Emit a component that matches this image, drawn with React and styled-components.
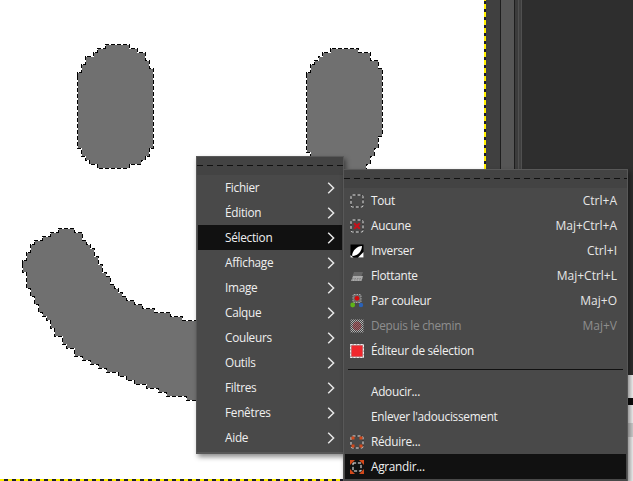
import React from "react";
import styled, { createGlobalStyle } from "styled-components";

const Global = createGlobalStyle`
  html, body { margin: 0; padding: 0; background: #2e2e2e; overflow: hidden; }
  #root { width: 633px; height: 481px; }
`;

const Window = styled.div`
  position: relative;
  display: flex;
  width: 633px;
  height: 481px;
  overflow: hidden;
  font-family: "Open Sans", "Noto Sans", sans-serif;
`;

const Canvas = styled.div`
  position: relative;
  flex: 0 0 484px;
  height: 481px;
  background: #fff;
`;
const Drawing = styled.svg`
  display: block;
  width: 484px;
  height: 481px;
`;
const BottomGuide = styled.div`
  position: absolute;
  left: 0;
  right: 0;
  bottom: 0;
  height: 2px;
  background: repeating-linear-gradient(90deg, #ffef00 0 4px, #1c1c28 4px 8px);
`;
const VerticalGuide = styled.div`
  flex: 0 0 2px;
  background: repeating-linear-gradient(0deg, #ffef00 0 5px, #1c1c28 5px 8px);
`;
const Strip = styled.div`
  flex: 0 0 ${(p) => p.$w}px;
  background: ${(p) => p.$c};
`;
const DarkPanel = styled.div`
  flex: 1;
  background: #2e2e2e;
`;
const Peek = styled.div`
  position: absolute;
  left: 628px;
  top: 375px;
  width: 5px;
  height: 106px;
  background: linear-gradient(#f4f4f4 0 23px, #0b0b0b 23px 30px, #f2f2f2 30px 48px, #d0d0d0 48px 62px, #f2f2f2 62px);
`;

const Menu = styled.div`
  position: absolute;
  left: ${(p) => p.$x}px;
  top: ${(p) => p.$y}px;
  width: ${(p) => p.$w}px;
  box-sizing: border-box;
  background: #494949;
  border: 1px solid #585858;
  border-bottom-width: ${(p) => (p.$open ? 0 : 2)}px;
  box-shadow: 2px 3px 5px rgba(0, 0, 0, 0.45);
  padding-bottom: 2px;
`;
const Tearoff = styled.div`
  height: 18px;
  box-sizing: border-box;
  background: #434343;
  padding-top: 8px;
  &::after {
    content: "";
    display: block;
    height: 1px;
    background: repeating-linear-gradient(90deg, #111 0 6px, transparent 6px 10px);
  }
`;
const Row = styled.div`
  display: flex;
  align-items: center;
  box-sizing: border-box;
  height: 25px;
  margin: 0 1px;
  padding: ${(p) => (p.$wide ? "0 9px 0 5px" : "0 7px 0 27px")};
  font-size: 11.8px;
  letter-spacing: -0.28px;
  color: ${(p) => (p.$dim ? "#8e8e8e" : "#f0f0f0")};
  background: ${(p) => (p.$active ? "#111111" : "transparent")};
  white-space: nowrap;
`;
const IconSlot = styled.span`
  flex: 0 0 14px;
  width: 14px;
  height: 14px;
  margin-right: 7px;
  opacity: ${(p) => (p.$dim ? 0.75 : 1)};
  svg { display: block; }
`;
const Label = styled.span`
  flex: 1;
  padding-bottom: 2px;
`;
const Shortcut = styled.span`
  font-size: 12px;
  letter-spacing: 0;
  padding-bottom: 1px;
  color: ${(p) => (p.$dim ? "#8e8e8e" : "#e6e6e6")};
`;
const Rule = styled.div`
  height: 1px;
  margin: 6px 4px 9px;
  background: #111;
`;

// Walks along a polygon and snaps it to a coarse pixel grid so that the outline looks like a real selection edge
function jagged(pts, step = 4) {
  const out = [];
  for (let i = 0; i < pts.length; i++) {
    const [x0, y0] = pts[i];
    const [x1, y1] = pts[(i + 1) % pts.length];
    const n = Math.max(1, Math.round(Math.hypot(x1 - x0, y1 - y0) / step));
    for (let k = 0; k < n; k++) {
      const x = Math.round((x0 + ((x1 - x0) * k) / n) / step) * step;
      const y = Math.round((y0 + ((y1 - y0) * k) / n) / step) * step;
      const last = out[out.length - 1];
      if (!last || last[0] !== x || last[1] !== y) {
        if (last) out.push([x, last[1]]);
        out.push([x, y]);
      }
    }
  }
  return "M" + out.map((p) => p.join(" ")).join("L") + "Z";
}

const leftEye = [
  [76, 74], [82, 60], [92, 51], [104, 45], [124, 45], [137, 51], [147, 62], [152, 74],
  [152, 146], [147, 156], [138, 163], [125, 168], [104, 168], [92, 163], [82, 156], [76, 146],
];
const rightEye = [
  [304, 76], [310, 62], [320, 52], [332, 47], [350, 47], [364, 53], [374, 64], [380, 76],
  [380, 130], [375, 147], [365, 168], [350, 178], [332, 178], [318, 170], [310, 158], [304, 146],
];
const mouth = [
  [24, 262], [30, 247], [42, 236], [54, 230], [70, 229], [82, 236], [94, 250], [104, 270],
  [115, 286], [127, 298], [147, 308], [172, 315], [198, 323], [240, 340], [240, 404],
  [198, 400], [172, 394], [152, 387], [127, 377], [102, 366], [77, 352], [59, 335],
  [50, 320], [37, 300], [29, 285],
];

const Blob = ({ pts, dx = 0 }) => {
  const d = jagged(pts);
  return (
    <g shapeRendering="crispEdges" transform={`translate(${dx} 0)`}>
      <path d={d} fill="#707070" />
      <path d={d} fill="none" stroke="#fff" strokeWidth="1" />
      <path d={d} fill="none" stroke="#000" strokeWidth="1" strokeDasharray="4 2" />
    </g>
  );
};

const Chevron = styled.svg`
  flex: 0 0 8px;
  width: 8px;
  height: 12px;
`;
const Arrow = () => (
  <Chevron viewBox="0 0 8 12">
    <path d="M1.2 .8 6.6 6 1.2 11.2" fill="none" stroke="#e8e8e8" strokeWidth="1.5" />
  </Chevron>
);

const Dashed = ({ x = 0.5, y = 0.5, s = 13, r = 1.5 }) => (
  <g fill="none" strokeWidth="1">
    <rect x={x + 0.5} y={y + 0.5} width={s - 1} height={s - 1} rx={r} stroke="#2c2c2c" />
    <rect x={x + 0.5} y={y + 0.5} width={s - 1} height={s - 1} rx={r} stroke="#eee" strokeDasharray="3 2" />
  </g>
);

const Svg = ({ children }) => (
  <svg width="14" height="14" viewBox="0 0 14 14">{children}</svg>
);

const icons = {
  all: <Svg><Dashed /></Svg>,
  none: (
    <Svg>
      <Dashed />
      <path d="M4.2 4.2 9.8 9.8M9.8 4.2 4.2 9.8" stroke="#c8101a" strokeWidth="2" />
    </Svg>
  ),
  invert: (
    <Svg>
      <rect x="0.5" y="0.5" width="13" height="13" fill="#000" />
      <path d="M13.5 8V13.5H8Z" fill="#fff" />
      <path d="M2 11.5C2.5 6.5 7 2 12 2 12 7 8 11.5 3 12Z" fill="#fff" />
      <path d="M.5 13.5 .5 11 3.5 13.5Z" fill="#fff" />
    </Svg>
  ),
  float: (
    <Svg>
      <path d="M4 3H13L11.5 7H2.5Z" fill="#666" />
      <path d="M3 7H13L11.5 12H1Z" fill="#aaa" />
      <path d="M2 9.5H12.5M1.5 11H12" stroke="#777" strokeWidth=".7" strokeDasharray="1.5 1" />
    </Svg>
  ),
  color: (
    <Svg>
      <rect x="3" y="0.5" width="8" height="8" rx="1" fill="#6b6b6b" stroke="#aaa" strokeDasharray="1.5 1" />
      <circle cx="7" cy="4.3" r="2.4" fill="#cf0d0d" />
      <circle cx="2.7" cy="11" r="2.4" fill="#5fb317" />
      <circle cx="11" cy="11" r="2.2" fill="#2a62b8" />
    </Svg>
  ),
  path: (
    <Svg>
      <defs>
        <pattern id="chk" width="2" height="2" patternUnits="userSpaceOnUse">
          <rect width="2" height="2" fill="#d8d8d8" />
          <rect width="1" height="1" fill="#444" />
          <rect x="1" y="1" width="1" height="1" fill="#444" />
        </pattern>
      </defs>
      <rect x="0.5" y="0.5" width="13" height="13" fill="url(#chk)" />
      <circle cx="7" cy="7" r="4.4" fill="#a02a34" opacity=".6" />
    </Svg>
  ),
  editor: (
    <Svg>
      <rect x="0" y="0" width="14" height="14" fill="#aaa" />
      <rect x="0.5" y="0.5" width="13" height="13" fill="none" stroke="#eee" strokeDasharray="2 1.4" />
      <rect x="1.5" y="1.5" width="11" height="11" fill="#f0272d" />
    </Svg>
  ),
  shrink: (
    <Svg>
      <Dashed />
      <g fill="#d2481a">
        <rect x="1.5" y="1.5" width="3" height="3" />
        <rect x="9.5" y="1.5" width="3" height="3" />
        <rect x="1.5" y="9.5" width="3" height="3" />
        <rect x="9.5" y="9.5" width="3" height="3" />
      </g>
    </Svg>
  ),
  grow: (
    <Svg>
      <Dashed x={2.5} y={2.5} s={9} r={0} />
      <g fill="#d2481a">
        <path d="M0 0H5L0 5Z" />
        <path d="M14 0H9L14 5Z" />
        <path d="M0 14H5L0 9Z" />
        <path d="M14 14H9L14 9Z" />
      </g>
    </Svg>
  ),
};

const mainItems = ["Fichier", "Édition", "Sélection", "Affichage", "Image", "Calque", "Couleurs", "Outils", "Filtres", "Fenêtres", "Aide"];

const upper = [
  { icon: "all", label: "Tout", key: "Ctrl+A" },
  { icon: "none", label: "Aucune", key: "Maj+Ctrl+A" },
  { icon: "invert", label: "Inverser", key: "Ctrl+I" },
  { icon: "float", label: "Flottante", key: "Maj+Ctrl+L" },
  { icon: "color", label: "Par couleur", key: "Maj+O" },
  { icon: "path", label: "Depuis le chemin", key: "Maj+V", dim: true },
  { icon: "editor", label: "Éditeur de sélection" },
];
const lower = [
  { label: "Adoucir..." },
  { label: "Enlever l'adoucissement" },
  { icon: "shrink", label: "Réduire..." },
  { icon: "grow", label: "Agrandir...", active: true },
];

const SubRow = ({ icon, label, shortcut, dim, active }) => (
  <Row $wide $dim={dim} $active={active}>
    <IconSlot $dim={dim}>{icon && icons[icon]}</IconSlot>
    <Label>{label}</Label>
    {shortcut && <Shortcut $dim={dim}>{shortcut}</Shortcut>}
  </Row>
);

export default function App() {
  return (
    <Window>
      <Global />
      <Canvas>
        <Drawing viewBox="0 0 484 481">
          <Blob pts={leftEye} dx={1} />
          <Blob pts={rightEye} dx={2} />
          <Blob pts={mouth} dx={-2} />
        </Drawing>
        <BottomGuide />
      </Canvas>
      <VerticalGuide />
      <Strip $w={14} $c="#404040" />
      <Strip $w={1} $c="#1e1e1e" />
      <Strip $w={13} $c="#565656" />
      <Strip $w={1} $c="#1e1e1e" />
      <Strip $w={3} $c="#3c3c3c" />
      <Strip $w={1} $c="#505050" />
      <Strip $w={2} $c="#404040" />
      <Strip $w={1} $c="#505050" />
      <DarkPanel />
      <Peek />
      <Menu $x={196} $y={156} $w={148}>
        <Tearoff />
        {mainItems.map((m) => (
          <Row key={m} $active={m === "Sélection"}>
            <Label>{m}</Label>
            <Arrow />
          </Row>
        ))}
      </Menu>
      <Menu $x={343} $y={169} $w={285} $open>
        <Tearoff />
        {upper.map((r) => (
          <SubRow key={r.label} icon={r.icon} label={r.label} shortcut={r.key} dim={r.dim} />
        ))}
        <Rule />
        {lower.map((r) => (
          <SubRow key={r.label} icon={r.icon} label={r.label} active={r.active} />
        ))}
      </Menu>
    </Window>
  );
}
